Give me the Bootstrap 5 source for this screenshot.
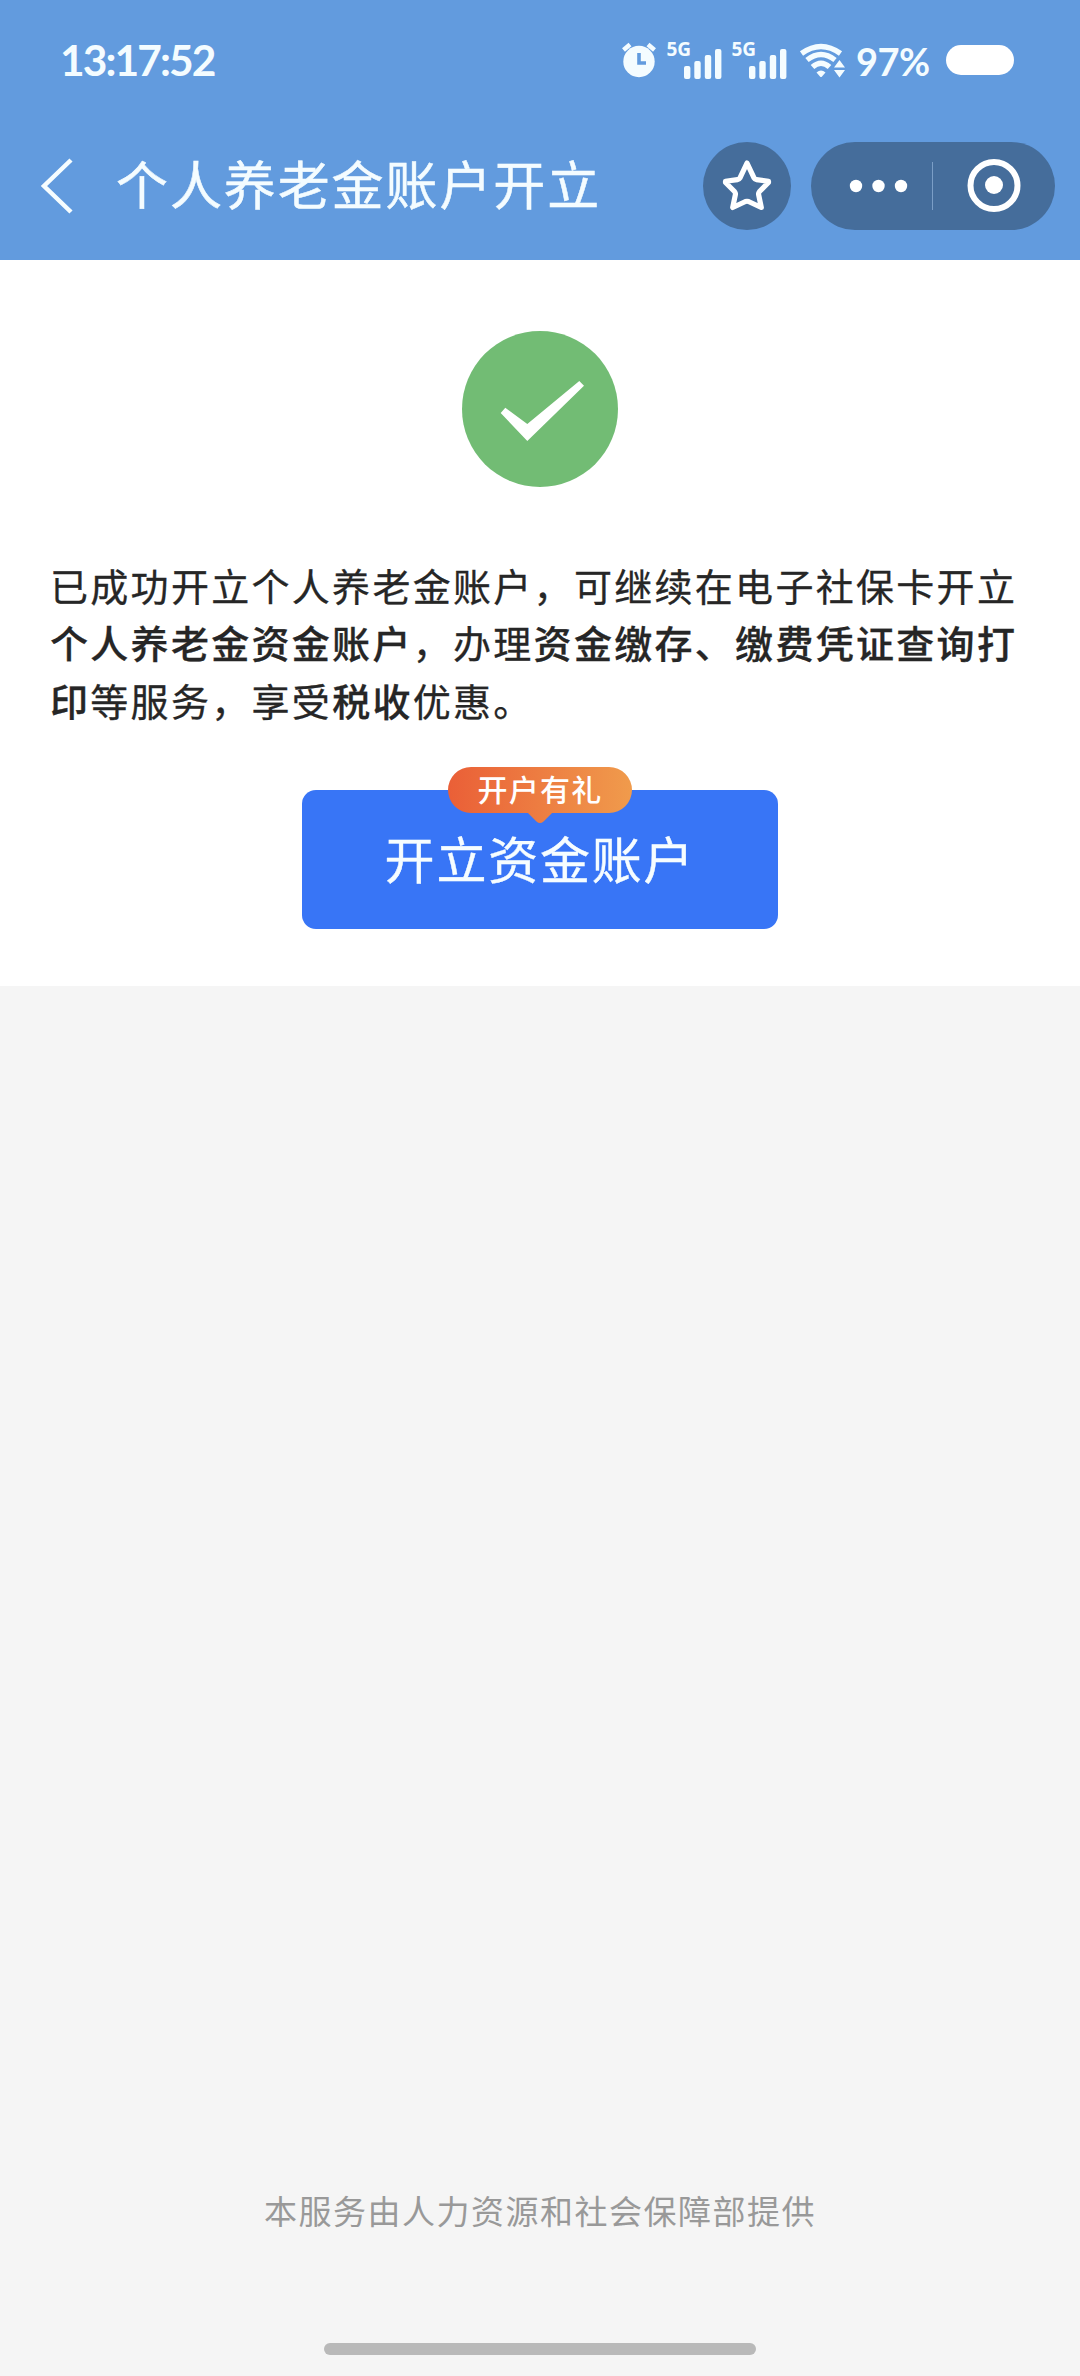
<!DOCTYPE html>
<html lang="zh-CN">
<head>
<meta charset="utf-8">
<meta name="viewport" content="width=device-width, initial-scale=1">
<title>个人养老金账户开立</title>
<link href="https://cdn.jsdelivr.net/npm/bootstrap@5.3.0/dist/css/bootstrap.min.css" rel="stylesheet">
<style>
  body { font-family: "Noto Sans CJK SC", sans-serif; background: #f5f5f5; color: #262626; overflow: hidden; }
  .screen { width: 1080px; height: 2376px; }
  .app-head { background: #629bde; height: 260px; color: #f4fcff; }
  .status-bar { height: 120px; padding-left: 60px; padding-right: 66px; }
  .clock { font: 700 42.5px/1 Lato, sans-serif; letter-spacing: -1.9px; }
  .status-icons { height: 56px; }
  .net-label { font: 700 19px/1 "Noto Sans", sans-serif; fill: #f4fcff; }
  .percent { font: 700 38px/1 Lato, sans-serif; letter-spacing: -.6px; margin: 2px 0 0 9px; width: 90px; }
  .battery { width: 68px; height: 30px; background: #fff; }
  .title-bar { height: 140px; padding: 22px 25px 30px 40px; }
  .page-title { font-size: 52px; letter-spacing: 1.9px; line-height: 88px; margin: -6px 0 0 42px; font-weight: 400; -webkit-text-stroke: .5px; }
  .pill { background: #456d9b; height: 88px; }
  .pill-star { width: 88px; margin-right: 20px; }
  .pill-menu { width: 244px; }
  .result { height: 726px; padding: 71px 50px 0; }
  .message { font-size: 38px; line-height: 57.3px; letter-spacing: 2.3px; margin: 69px 0 0; width: 980px; -webkit-text-stroke: .3px; }
  .message b { font-weight: 500; }
  .open-btn, .open-btn:hover { width: 476px; height: 139px; margin-top: 62px; border: 0; border-radius: 14px; background: #3875f6; color: #f6fdff; font-size: 50px; letter-spacing: 1.8px; line-height: 135px; padding: 0 0 4px; -webkit-text-stroke: .4px; }
  .gift { left: 146px; top: -23px; width: 184px; height: 56px; }
  .gift-text { left: 146px; top: -23px; width: 184px; height: 46px; line-height: 43px; font-size: 30px; font-weight: 500; letter-spacing: 1.3px; color: #fff; -webkit-text-stroke: 0; }
  .provider { font-size: 33px; letter-spacing: 1.5px; line-height: 48px; color: #999; margin-bottom: 109px; }
  .home-bar { width: 432px; height: 12px; background: #b9b9b9; margin-bottom: 21px; }
</style>
</head>
<body>
<div class="screen d-flex flex-column">
  <header class="app-head">
    <div class="status-bar d-flex align-items-center justify-content-between">
      <div class="clock">13:17:52</div>
      <div class="status-icons d-flex align-items-center">
        <svg width="226" height="56" viewBox="622 32 226 56" fill="#f4fcff">
          <circle cx="640" cy="61.5" r="15.7"/>
          <path d="M624.5 50l6.5-5.500M655.500 50l-6.500-5.500" stroke="#f4fcff" stroke-width="4.500"/>
          <path d="M640 53v10h7" fill="none" stroke="#629bde" stroke-width="3.600"/>
          <text class="net-label" x="667.500" y="56">5G</text>
          <g id="bars"><rect x="685" y="66" width="6.400" height="13" rx="2"/><rect x="695.300" y="61" width="6.400" height="18" rx="2"/><rect x="705.800" y="55" width="6.400" height="24" rx="2"/><rect x="716" y="49" width="6.400" height="30" rx="2"/></g>
          <text class="net-label" x="732.500" y="56">5G</text>
          <use href="#bars" x="65"/>
          <g fill="none" stroke="#f4fcff" stroke-width="5.400">
            <path d="M802.500 53.500Q822 39.500 841.500 53.500"/>
            <path d="M808 60Q822 49 836 60"/>
            <path d="M813.500 67Q822 59.500 830.500 67"/>
          </g>
          <path d="M817.500 72.500Q822 68.500 826.500 72.500L823 76.500Q822 77.500 821 76.500Z"/>
          <path d="M840.500 60l5.500 7.500h-11zM840.500 77.500l5.500-7.500h-11z" stroke="#629bde" stroke-width="1.500" paint-order="stroke"/>
        </svg>
        <span class="percent">97%</span>
        <span class="battery rounded-pill"></span>
      </div>
    </div>
    <nav class="title-bar d-flex align-items-center">
      <svg width="34" height="56" viewBox="0 0 34 56" fill="none" stroke="#f6fdff" stroke-width="4.500"><path d="M31 2L4 28l27 26"/></svg>
      <h1 class="page-title">个人养老金账户开立</h1>
      <div class="pill pill-star rounded-circle ms-auto flex-shrink-0">
        <svg width="88" height="88" viewBox="0 0 88 88" fill="none" stroke="#fff" stroke-width="5.200" stroke-linejoin="round"><path d="M44 21L51 35.800Q52 37.400 53.500 37.600L65.500 39.300V40.500L56.500 49.500Q55.300 51 55.600 52.500L58.300 65.500L45.500 59.500Q44 59 42.500 59.500L29.700 65.500L32.400 52.500Q32.700 51 31.500 49.500L22.500 40.500V39.300L34.500 37.600Q36 37.400 37 35.800Z"/></svg>
      </div>
      <div class="pill pill-menu rounded-pill flex-shrink-0">
        <svg width="244" height="88" viewBox="811 142 244 88" fill="#fff"><circle cx="856" cy="186" r="6.200"/><circle cx="878.500" cy="186" r="6.200"/><circle cx="901" cy="186" r="6.200"/><path d="M932 162h1v48h-1z" fill="#7b9ec6"/><circle cx="994" cy="185.500" r="23.500" fill="none" stroke="#fff" stroke-width="6"/><circle cx="994" cy="185" r="9"/></svg>
      </div>
    </nav>
  </header>
  <main class="result bg-white d-flex flex-column align-items-center">
    <svg class="flex-shrink-0" width="156" height="156" viewBox="462 331 156 156"><circle cx="540" cy="409" r="78" fill="#72bc74"/><path d="M500.700 413L505.300 407.700L527.300 424L579.300 381L584 385.700L527.300 441Z" fill="#fff"/></svg>
    <p class="message">已成功开立个人养老金账户，可继续在电子社保卡开立<b>个人养老金资金账户</b>，办理<b>资金缴存、缴费凭证查询打印</b>等服务，享受<b>税收</b>优惠。</p>
    <button type="button" class="open-btn btn btn-primary position-relative">开立资金账户
      <svg class="gift position-absolute" viewBox="0 0 184 56"><defs><linearGradient id="warm"><stop stop-color="#ea5f37"/><stop offset="1" stop-color="#f09b4c"/></linearGradient></defs><path d="M23 0H161A23 23 0 0 1 161 46H104L95.500 54.500Q92 57.500 88.500 54.500L80 46H23A23 23 0 0 1 23 0Z" fill="url(#warm)"/></svg>
      <span class="gift-text position-absolute">开户有礼</span>
    </button>
  </main>
  <footer class="mt-auto d-flex flex-column align-items-center">
    <div class="provider">本服务由人力资源和社会保障部提供</div>
    <div class="home-bar rounded-pill"></div>
  </footer>
</div>
<script src="https://cdn.jsdelivr.net/npm/bootstrap@5.3.0/dist/js/bootstrap.bundle.min.js"></script>
</body>
</html>
